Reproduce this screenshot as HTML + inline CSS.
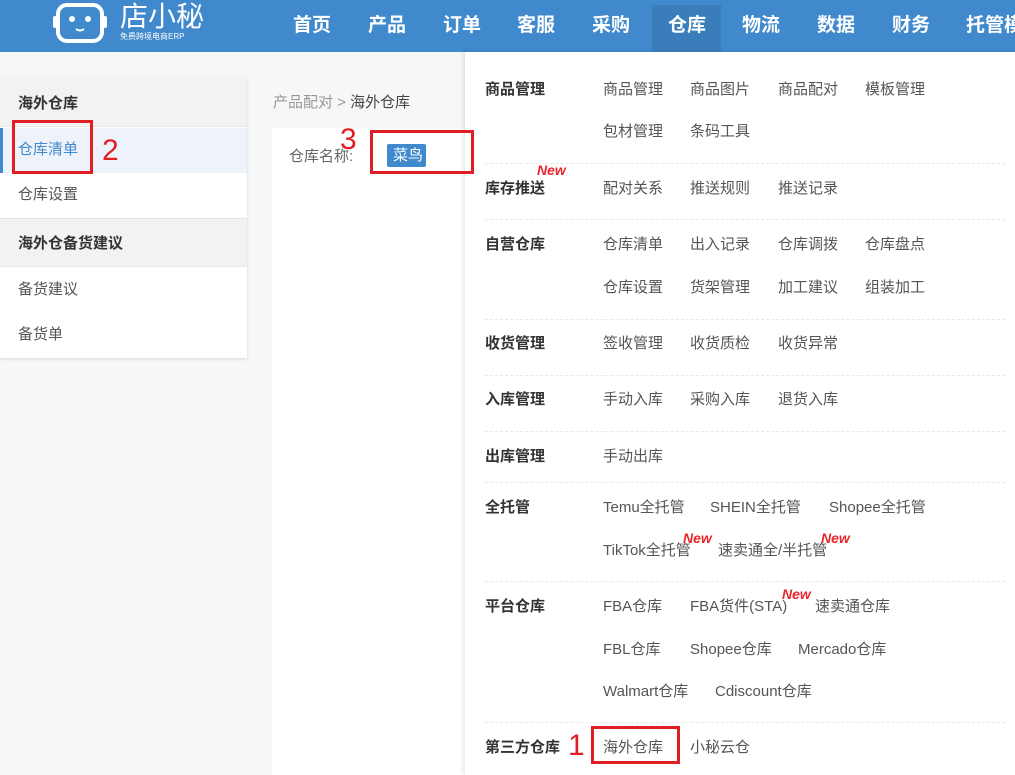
<!DOCTYPE html>
<html><head><meta charset="utf-8"><style>
*{margin:0;padding:0;box-sizing:border-box}
body{width:1015px;height:775px;overflow:hidden;background:#f6f7f8;font-family:"Liberation Sans","Noto Sans CJK SC",sans-serif;position:relative}
.t{position:absolute;white-space:nowrap;line-height:1}
.nav{position:absolute;left:0;top:0;width:1015px;height:52px;background:#3f89cc}
.ni{position:absolute;top:16px;font-size:19px;font-weight:bold;color:#fff;line-height:1;white-space:nowrap}
.side{position:absolute;left:0;top:78px;width:247px;height:280px;background:#fff;box-shadow:0 1px 3px rgba(0,0,0,.12)}
.sh{position:absolute;left:0;width:247px;height:49px;background:#f2f2f2;border-bottom:1px solid #e6e6e6}
.lab{font-size:15px;font-weight:bold;color:#333}
.it{font-size:15px;color:#555}
.new{position:absolute;font-size:14px;font-weight:bold;font-style:italic;color:#e8262b;line-height:1}
.dl{position:absolute;left:485px;width:520px;border-top:1px dashed #e8e8e8}
.red{position:absolute;border:3px solid #e01f25;z-index:5}
.rn{position:absolute;color:#e01f25;font-size:30px;line-height:1;z-index:5}
</style></head><body>
<div class="nav">
 <svg style="position:absolute;left:52px;top:2px" width="56" height="42" viewBox="0 0 56 42"><rect x="6" y="3" width="44" height="36" rx="9" fill="none" stroke="#fff" stroke-width="4"/><rect x="1" y="14" width="4" height="12" rx="2" fill="#fff"/><rect x="51" y="14" width="4" height="12" rx="2" fill="#fff"/><circle cx="20" cy="17" r="3" fill="#fff"/><circle cx="36" cy="17" r="3" fill="#fff"/><path d="M24 27q4 3 8 0" stroke="#fff" stroke-width="2" fill="none"/></svg>
 <div class="t" style="left:120px;top:3px;font-size:28px;color:#fff">店小秘</div>
 <div class="t" style="left:120px;top:33px;font-size:8px;color:#fff">免费跨境电商ERP</div>
 <div style="position:absolute;left:652px;top:5px;width:69px;height:47px;background:#3a7dbb"></div>
 <div class="ni" style="left:293px">首页</div><div class="ni" style="left:368px">产品</div><div class="ni" style="left:443px">订单</div><div class="ni" style="left:517px">客服</div><div class="ni" style="left:592px">采购</div><div class="ni" style="left:668px">仓库</div><div class="ni" style="left:742px">物流</div><div class="ni" style="left:817px">数据</div><div class="ni" style="left:892px">财务</div><div class="ni" style="left:966px">托管模</div>
</div>
<div class="side">
 <div class="sh" style="top:0"></div>
 <div class="t lab" style="left:18px;top:18px">海外仓库</div>
 <div style="position:absolute;left:0;top:50px;width:247px;height:45px;background:#eef2fa;border-left:3px solid #3f89cc"></div>
 <div class="t" style="left:18px;top:64px;font-size:15px;color:#3f89cc">仓库清单</div>
 <div class="t it" style="left:18px;top:109px">仓库设置</div>
 <div class="sh" style="top:140px;border-top:1px solid #e6e6e6"></div>
 <div class="t lab" style="left:18px;top:158px">海外仓备货建议</div>
 <div class="t it" style="left:18px;top:204px">备货建议</div>
 <div class="t it" style="left:18px;top:249px">备货单</div>
</div>
<div class="t" style="left:273px;top:95px;font-size:15px;color:#999">产品配对 &gt; <span style="color:#444">海外仓库</span></div>
<div style="position:absolute;left:272px;top:128px;width:200px;height:647px;background:#fff"></div>
<div class="t" style="left:289px;top:149px;font-size:15px;color:#666">仓库名称:</div>
<div style="position:absolute;left:387px;top:144px;width:39px;height:23px;background:#3f89cc;border-radius:2px"></div>
<div class="t" style="left:393px;top:148px;font-size:15px;color:#fff">菜鸟</div>

<div style="position:absolute;left:465px;top:52px;width:550px;height:723px;background:#fff;box-shadow:-2px 0 4px rgba(0,0,0,.1)"></div>
<div class="red" style="left:370px;top:130px;width:104px;height:44px"></div>
<div class="rn" style="left:340px;top:125px">3</div>
<div class="red" style="left:12px;top:120px;width:81px;height:54px"></div>
<div class="rn" style="left:102px;top:136px">2</div>
<div class="dl" style="top:163px"></div><div class="dl" style="top:219px"></div><div class="dl" style="top:319px"></div><div class="dl" style="top:375px"></div><div class="dl" style="top:431px"></div><div class="dl" style="top:482px"></div><div class="dl" style="top:581px"></div><div class="dl" style="top:722px"></div>

<div class="t lab" style="left:485px;top:82px">商品管理</div>
<div class="t it" style="left:603px;top:82px">商品管理</div><div class="t it" style="left:690px;top:82px">商品图片</div><div class="t it" style="left:778px;top:82px">商品配对</div><div class="t it" style="left:865px;top:82px">模板管理</div>
<div class="t it" style="left:603px;top:124px">包材管理</div><div class="t it" style="left:690px;top:124px">条码工具</div>
<div class="new" style="left:537px;top:163px">New</div>
<div class="t lab" style="left:485px;top:181px">库存推送</div>
<div class="t it" style="left:603px;top:181px">配对关系</div><div class="t it" style="left:690px;top:181px">推送规则</div><div class="t it" style="left:778px;top:181px">推送记录</div>
<div class="t lab" style="left:485px;top:237px">自营仓库</div>
<div class="t it" style="left:603px;top:237px">仓库清单</div><div class="t it" style="left:690px;top:237px">出入记录</div><div class="t it" style="left:778px;top:237px">仓库调拨</div><div class="t it" style="left:865px;top:237px">仓库盘点</div>
<div class="t it" style="left:603px;top:280px">仓库设置</div><div class="t it" style="left:690px;top:280px">货架管理</div><div class="t it" style="left:778px;top:280px">加工建议</div><div class="t it" style="left:865px;top:280px">组装加工</div>
<div class="t lab" style="left:485px;top:336px">收货管理</div>
<div class="t it" style="left:603px;top:336px">签收管理</div><div class="t it" style="left:690px;top:336px">收货质检</div><div class="t it" style="left:778px;top:336px">收货异常</div>
<div class="t lab" style="left:485px;top:392px">入库管理</div>
<div class="t it" style="left:603px;top:392px">手动入库</div><div class="t it" style="left:690px;top:392px">采购入库</div><div class="t it" style="left:778px;top:392px">退货入库</div>
<div class="t lab" style="left:485px;top:449px">出库管理</div>
<div class="t it" style="left:603px;top:449px">手动出库</div>
<div class="t lab" style="left:485px;top:500px">全托管</div>
<div class="t it" style="left:603px;top:500px">Temu全托管</div><div class="t it" style="left:710px;top:500px">SHEIN全托管</div><div class="t it" style="left:829px;top:500px">Shopee全托管</div>
<div class="t it" style="left:603px;top:543px">TikTok全托管</div><div class="t it" style="left:718px;top:543px">速卖通全/半托管</div>
<div class="new" style="left:683px;top:531px">New</div><div class="new" style="left:821px;top:531px">New</div>
<div class="t lab" style="left:485px;top:599px">平台仓库</div>
<div class="t it" style="left:603px;top:599px">FBA仓库</div><div class="t it" style="left:690px;top:599px">FBA货件(STA)</div><div class="t it" style="left:815px;top:599px">速卖通仓库</div>
<div class="new" style="left:782px;top:587px">New</div>
<div class="t it" style="left:603px;top:642px">FBL仓库</div><div class="t it" style="left:690px;top:642px">Shopee仓库</div><div class="t it" style="left:798px;top:642px">Mercado仓库</div>
<div class="t it" style="left:603px;top:684px">Walmart仓库</div><div class="t it" style="left:715px;top:684px">Cdiscount仓库</div>
<div class="t lab" style="left:485px;top:740px">第三方仓库</div>
<div class="t it" style="left:603px;top:740px">海外仓库</div><div class="t it" style="left:690px;top:740px">小秘云仓</div>
<div class="red" style="left:591px;top:726px;width:89px;height:38px"></div>
<div class="rn" style="left:568px;top:731px">1</div>
</body></html>
